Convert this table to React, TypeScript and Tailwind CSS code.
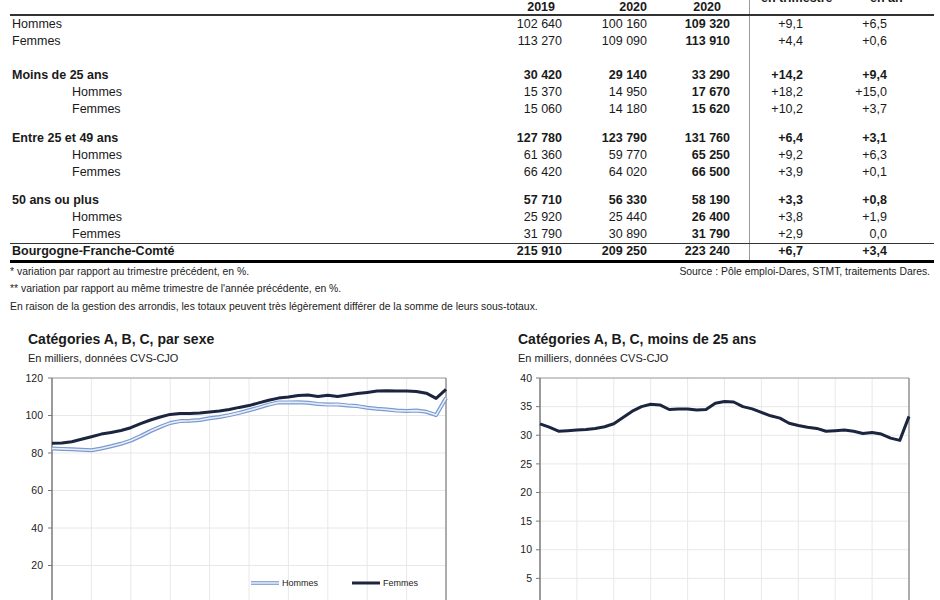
import React from "react"

type Row = {
    label: string
    values: string[]
    bold?: boolean
    indent?: boolean
}

const cols = "grid grid-cols-[492px_60px_85px_102px_54px_84px_47px]"

const block1: Row[] = [
    { label: "Hommes", values: ["102 640", "100 160", "109 320", "+9,1", "+6,5"] },
    { label: "Femmes", values: ["113 270", "109 090", "113 910", "+4,4", "+0,6"] },
]
const block2: Row[] = [
    { label: "Moins de 25 ans", values: ["30 420", "29 140", "33 290", "+14,2", "+9,4"], bold: true },
    { label: "Hommes", values: ["15 370", "14 950", "17 670", "+18,2", "+15,0"], indent: true },
    { label: "Femmes", values: ["15 060", "14 180", "15 620", "+10,2", "+3,7"], indent: true },
]
const block3: Row[] = [
    { label: "Entre 25 et 49 ans", values: ["127 780", "123 790", "131 760", "+6,4", "+3,1"], bold: true },
    { label: "Hommes", values: ["61 360", "59 770", "65 250", "+9,2", "+6,3"], indent: true },
    { label: "Femmes", values: ["66 420", "64 020", "66 500", "+3,9", "+0,1"], indent: true },
]
const block4: Row[] = [
    { label: "50 ans ou plus", values: ["57 710", "56 330", "58 190", "+3,3", "+0,8"], bold: true },
    { label: "Hommes", values: ["25 920", "25 440", "26 400", "+3,8", "+1,9"], indent: true },
    { label: "Femmes", values: ["31 790", "30 890", "31 790", "+2,9", "0,0"], indent: true },
]

const femmes = [85.2, 85.3, 86.0, 87.3, 88.7, 90.1, 91.0, 92.0, 93.5, 95.7, 97.6, 99.2, 100.6, 101.0, 101.1, 101.3, 101.9, 102.4, 103.2, 104.3, 105.3, 106.7, 108.1, 109.3, 109.8, 110.7, 110.9, 110.2, 110.8, 110.1, 111.0, 111.7, 112.3, 113.0, 113.2, 113.1, 113.0, 112.8, 111.9, 109.1, 113.9]
const hommes = [82.4, 82.2, 82.0, 81.7, 81.5, 82.4, 83.6, 84.9, 86.6, 89.0, 91.7, 94.0, 96.0, 97.0, 97.2, 97.6, 98.5, 99.2, 100.2, 101.4, 102.8, 104.2, 105.8, 107.0, 107.0, 107.1, 106.8, 106.2, 105.8, 105.9, 105.4, 105.0, 104.1, 103.6, 103.2, 102.6, 102.4, 102.6, 102.0, 100.2, 109.3]
const jeunes = [32.0, 31.4, 30.7, 30.8, 30.9, 31.0, 31.2, 31.5, 32.0, 33.1, 34.2, 35.0, 35.4, 35.3, 34.5, 34.6, 34.6, 34.4, 34.5, 35.6, 35.9, 35.8, 35.0, 34.6, 34.0, 33.4, 33.0, 32.1, 31.7, 31.4, 31.2, 30.7, 30.8, 30.9, 30.7, 30.3, 30.5, 30.2, 29.5, 29.1, 33.3]

function DataRow({ row }: { row: Row }) {
    const b = row.bold ? "font-bold" : ""
    return (
        <div className={`${cols} h-[17px] leading-[17px]`}>
            <div className={`${row.indent ? "pl-[62px]" : "pl-[2px]"} ${b}`}>{row.label}</div>
            <div className={`text-right ${b}`}>{row.values[0]}</div>
            <div className={`text-right ${b}`}>{row.values[1]}</div>
            <div className="pr-[19px] text-right font-bold">{row.values[2]}</div>
            <div className={`border-l-[1.5px] border-[#9a9a9a] text-right ${b}`}>{row.values[3]}</div>
            <div className={`text-right ${b}`}>{row.values[4]}</div>
            <div />
        </div>
    )
}

function Spacer({ h }: { h: string }) {
    return (
        <div className={`${cols} ${h}`}>
            <div />
            <div />
            <div />
            <div />
            <div className="border-l-[1.5px] border-[#9a9a9a]" />
            <div />
            <div />
        </div>
    )
}

function linePath(data: number[], x0: number, dx: number, y: (v: number) => number) {
    return data.map((v, i) => `${i === 0 ? "M" : "L"}${(x0 + i * dx).toFixed(1)} ${y(v).toFixed(1)}`).join(" ")
}

type ChartProps = {
    width: number
    plotX: number
    plotW: number
    max: number
    step: number
    labelX: number
    children: (y: (v: number) => number, dx: number) => React.ReactNode
}

function Chart({ width, plotX, plotW, max, step, labelX, children }: ChartProps) {
    const top = 8
    const plotH = max === 120 ? 225 : 229
    const y = (v: number) => top + ((max - v) / max) * plotH
    const ticks: number[] = []
    for (let v = max; v > 0; v -= step) ticks.push(v)
    const dx = plotW / 40
    return (
        <svg width={width} height={240} className="block">
            {ticks.map((v) => (
                <line key={v} x1={plotX} x2={plotX + plotW} y1={y(v)} y2={y(v)} stroke="#e8e8e8" strokeWidth={1} />
            ))}
            {Array.from({ length: 9 }, (_, i) => {
                const x = plotX + ((i + 1) * plotW) / 10
                return <line key={i} x1={x} x2={x} y1={top} y2={240} stroke="#e8e8e8" strokeWidth={1} />
            })}
            <line x1={plotX} x2={plotX + plotW} y1={top} y2={top} stroke="#a0a0a0" strokeWidth={1.2} />
            <line x1={plotX + plotW} x2={plotX + plotW} y1={top} y2={240} stroke="#909090" strokeWidth={1.5} />
            <line x1={plotX} x2={plotX} y1={top} y2={240} stroke="#7a7a7a" strokeWidth={1.5} />
            {ticks.map((v) => (
                <g key={v}>
                    <line x1={plotX - 4} x2={plotX} y1={y(v)} y2={y(v)} stroke="#7a7a7a" strokeWidth={1} />
                    <text x={labelX} y={y(v)} dy="0.35em" textAnchor="end" fontSize={10.5} fill="#222">
                        {v}
                    </text>
                </g>
            ))}
            {children(y, dx)}
        </svg>
    )
}

export default function App() {
    return (
        <div className="h-[600px] w-[940px] overflow-hidden bg-white font-['Liberation_Sans',Arial,sans-serif] text-[#1a1a1a]">
            {/* tableau */}
            <div className="ml-[10px] w-[924px] text-[12.5px]">
                <div className={`${cols} h-[16px] border-b-2 border-[#333] leading-[14px]`}>
                    <div />
                    <div className="pr-[7px] text-right font-bold">2019</div>
                    <div className="text-right font-bold">2020</div>
                    <div className="pr-[28px] text-right font-bold">2020</div>
                    <div className="border-l-[1.5px] border-[#9a9a9a]">
                        <div className="-mt-[8px] whitespace-nowrap pl-[11px] font-bold leading-[12px]">en trimestre</div>
                    </div>
                    <div>
                        <div className="-mt-[8px] whitespace-nowrap pl-[67px] font-bold leading-[12px]">en an</div>
                    </div>
                    <div />
                </div>
                {block1.map((r, i) => <DataRow key={i} row={r} />)}
                <Spacer h="h-[17px]" />
                {block2.map((r, i) => <DataRow key={i} row={r} />)}
                <Spacer h="h-[12px]" />
                {block3.map((r, i) => <DataRow key={i} row={r} />)}
                <Spacer h="h-[11px]" />
                {block4.map((r, i) => <DataRow key={i} row={r} />)}
                <div className={`${cols} h-[19.5px] border-t-[1.5px] border-b-[3px] border-t-[#333] border-b-black font-bold leading-[15px]`}>
                    <div className="pl-[2px]">Bourgogne-Franche-Comté</div>
                    <div className="text-right">215 910</div>
                    <div className="text-right">209 250</div>
                    <div className="pr-[19px] text-right">223 240</div>
                    <div className="border-l-[1.5px] border-[#9a9a9a] text-right">+6,7</div>
                    <div className="text-right">+3,4</div>
                    <div />
                </div>
            </div>

            {/* notes */}
            <div className="pl-[10px] pr-[10px] text-[10.4px] leading-[17.5px] text-[#222]">
                <div className="flex justify-between">
                    <span>* variation par rapport au trimestre précédent, en %.</span>
                    <span>Source : Pôle emploi-Dares, STMT, traitements Dares.</span>
                </div>
                <div>** variation par rapport au même trimestre de l'année précédente, en %.</div>
                <div>En raison de la gestion des arrondis, les totaux peuvent très légèrement différer de la somme de leurs sous-totaux.</div>
            </div>

            {/* graphiques */}
            <div className="mt-[16px] flex">
                <div className="w-[510px] pl-[20px]">
                    <div className="pl-[8px] text-[14px] font-bold leading-[16px]">Catégories A, B, C, par sexe</div>
                    <div className="mt-[4px] pl-[8px] text-[11px] leading-[14px] text-[#222]">En milliers, données CVS-CJO</div>
                    <div className="mt-[5px]">
                        <Chart width={432} plotX={32} plotW={394} max={120} step={20} labelX={23}>
                            {(y, dx) => (
                                <>
                                    <path d={linePath(hommes, 32, dx, y)} fill="none" stroke="#7b9ad0" strokeWidth={4} strokeLinejoin="round" />
                                    <path d={linePath(hommes, 32, dx, y)} fill="none" stroke="#e8eef8" strokeWidth={1.6} strokeLinejoin="round" />
                                    <path d={linePath(femmes, 32, dx, y)} fill="none" stroke="#1c2540" strokeWidth={3} strokeLinejoin="round" />
                                    <line x1={231} x2={259} y1={213} y2={213} stroke="#8fa9d8" strokeWidth={4} />
                                    <line x1={231} x2={259} y1={213} y2={213} stroke="#e8eef8" strokeWidth={1.4} />
                                    <text x={262} y={213} dy="0.35em" fontSize={9} fill="#222">Hommes</text>
                                    <line x1={332} x2={360} y1={213} y2={213} stroke="#1c2540" strokeWidth={3} />
                                    <text x={363} y={213} dy="0.35em" fontSize={9} fill="#222">Femmes</text>
                                </>
                            )}
                        </Chart>
                    </div>
                </div>
                <div className="w-[410px]">
                    <div className="pl-[8px] text-[14px] font-bold leading-[16px]">Catégories A, B, C, moins de 25 ans</div>
                    <div className="mt-[4px] pl-[8px] text-[11px] leading-[14px] text-[#222]">En milliers, données CVS-CJO</div>
                    <div className="mt-[5px]">
                        <Chart width={410} plotX={30} plotW={369} max={40} step={5} labelX={22}>
                            {(y, dx) => (
                                <path d={linePath(jeunes, 30, dx, y)} fill="none" stroke="#1c2540" strokeWidth={3} strokeLinejoin="round" />
                            )}
                        </Chart>
                    </div>
                </div>
            </div>
        </div>
    )
}
